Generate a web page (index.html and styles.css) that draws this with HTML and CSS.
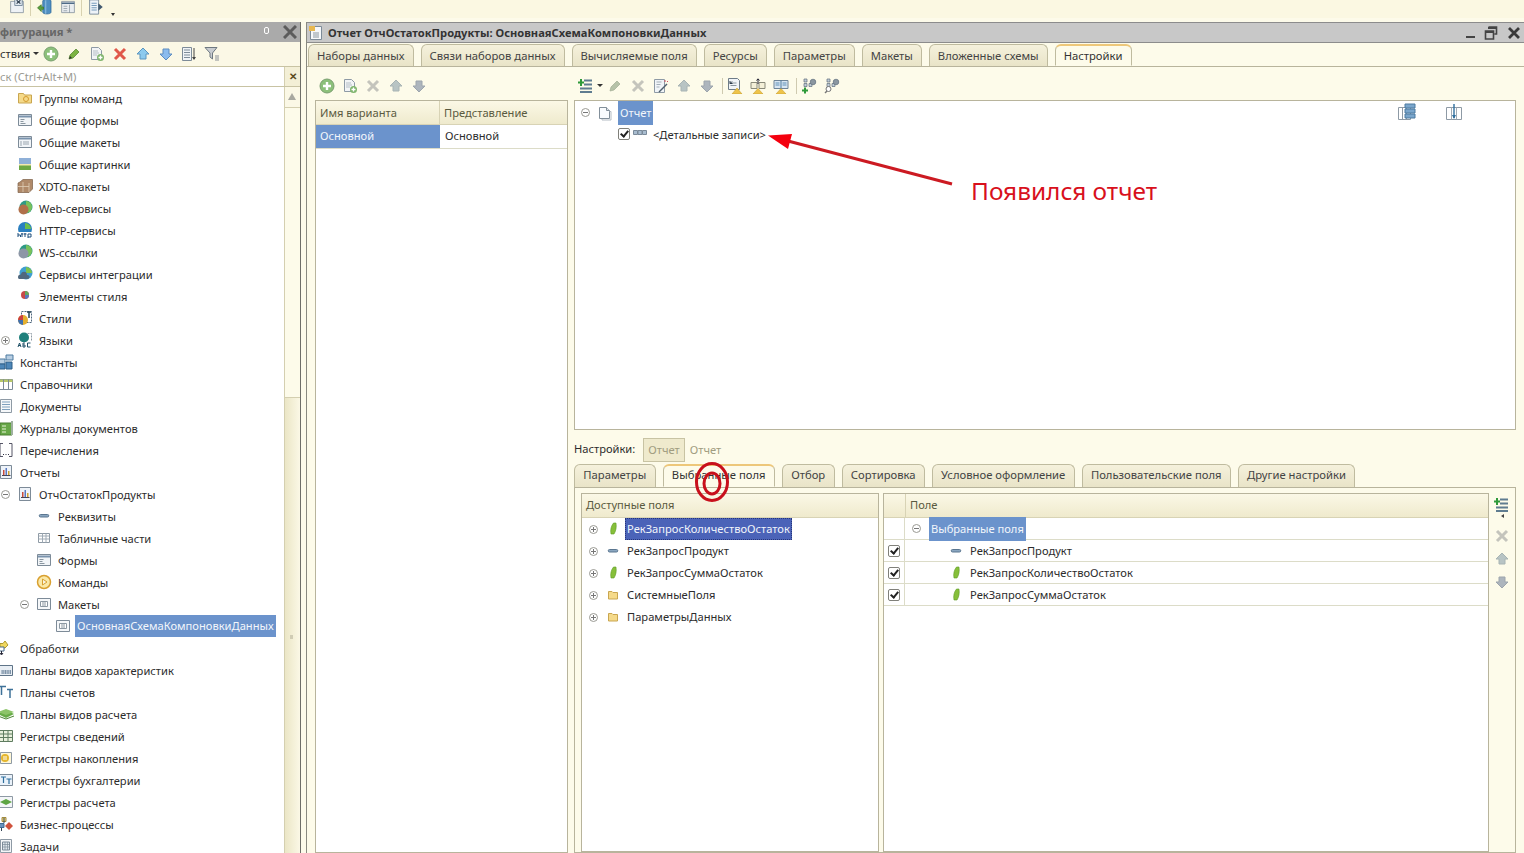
FILE: index.html
```html
<!DOCTYPE html>
<html>
<head>
<meta charset="utf-8">
<title>Отчет</title>
<link rel="stylesheet" href="styles.css">
</head>
<body>
<svg class="sprite" width="0" height="0">
	<symbol id="add" viewBox="0 0 16 16"><circle cx="8" cy="8" r="7" fill="#8cc07a" stroke="#7a9f70"/><path d="M8 4v8M4 8h8" stroke="#fff" stroke-width="2.400"/></symbol>
	<symbol id="pen" viewBox="0 0 16 16"><path d="M3 13l1-4 6-6 3 3-6 6z" fill="#7cb342" stroke="#4e7f2a" stroke-width=".7"/><path d="M3 13l1-3 2 2z" fill="#333"/></symbol>
	<symbol id="peng" viewBox="0 0 16 16"><path d="M3 13l1-4 6-6 3 3-6 6z" fill="#b6c2a8" stroke="#a0ac94" stroke-width=".7"/></symbol>
	<symbol id="copyadd" viewBox="0 0 16 16"><path d="M2.500 1.500h7l3 3v9h-10z" fill="#f2f4f6" stroke="#8e9aa5"/><path d="M4 5h5M4 7h6M4 9h4" stroke="#b5bec6"/><circle cx="11.500" cy="11.500" r="3.500" fill="#7fb56d"/><path d="M11.500 9.500v4M9.500 11.500h4" stroke="#fff" stroke-width="1.300"/></symbol>
	<symbol id="del" viewBox="0 0 16 16"><path d="M3 3l10 10M13 3L3 13" stroke="#e0584a" stroke-width="3"/></symbol>
	<symbol id="delg" viewBox="0 0 16 16"><path d="M3 3l10 10M13 3L3 13" stroke="#c4c4bc" stroke-width="3"/></symbol>
	<symbol id="up" viewBox="0 0 16 16"><path d="M8 2l6 6h-3v5H5V8H2z" fill="#8ccaee" stroke="#5c96c0"/></symbol>
	<symbol id="down" viewBox="0 0 16 16"><path d="M8 14l6-6h-3V3H5v5H2z" fill="#8cbcee" stroke="#5c8cc0"/></symbol>
	<symbol id="upg" viewBox="0 0 16 16"><path d="M8 2l6 6h-3v5H5V8H2z" fill="#b8c4c4" stroke="#a8b4b4"/></symbol>
	<symbol id="downg" viewBox="0 0 16 16"><path d="M8 14l6-6h-3V3H5v5H2z" fill="#adb5bd" stroke="#9da5ad"/></symbol>
	<symbol id="sortlist" viewBox="0 0 16 16"><path d="M1.500 1.500h9v13h-9z" fill="#f0f3f6" stroke="#7d8b98"/><path d="M3 4h6M3 6.500h6M3 9h6M3 11.500h6" stroke="#7d8b98"/><path d="M13 2v11" stroke="#444"/><path d="M11 11h4l-2 3z" fill="#444"/></symbol>
	<symbol id="filter" viewBox="0 0 16 16"><path d="M1 1.500h12L8.500 7v6L6 11V7z" fill="#c8ccd0" stroke="#6e7880"/><path d="M11 10h4M11 12h4M11 14h4" stroke="#8a9097"/></symbol>
	<symbol id="folder" viewBox="0 0 16 16"><path d="M3.500 4.500h3.500l1 1h4.500v6.500h-9z" fill="#f5da8a" stroke="#c9a650"/></symbol>
	<symbol id="cmdfolder" viewBox="0 0 16 16"><path d="M1.500 3.500h5l1 1.500h7v8h-13z" fill="#f5da8a" stroke="#c9a650"/><circle cx="9" cy="9" r="2.500" fill="none" stroke="#d39a30"/></symbol>
	<symbol id="docwin" viewBox="0 0 16 16"><path d="M2.500 1.500h11v13h-11z" fill="#f6f8fa" stroke="#7d8b98"/><path d="M1 1h6v5H1z" fill="#e8b850"/><path d="M5 8h6M5 10h6M5 12h6" stroke="#8a96a0"/></symbol>
	<symbol id="form" viewBox="0 0 16 16"><path d="M1.500 2.500h13v11h-13z" fill="#f2f5f8" stroke="#7d8b98"/><path d="M2 4.500h12" stroke="#7a93ad" stroke-width="2"/><path d="M3.500 7.500h4M3.500 9.500h3M3.500 11.500h5" stroke="#8a96a0"/></symbol>
	<symbol id="mock" viewBox="0 0 16 16"><path d="M1.500 2.500h13v11h-13z" fill="#f2f5f8" stroke="#7d8b98"/><path d="M2 4.500h12" stroke="#7a93ad" stroke-width="2"/><path d="M6 8h6M6 10h6M4 7v5" stroke="#9aa5af"/></symbol>
	<symbol id="layout" viewBox="0 0 16 16"><path d="M1.500 2.500h13v11h-13z" fill="#f6f8fa" stroke="#7d8b98"/><path d="M4.500 5.500h7v5h-7z" fill="#fff" stroke="#8c98a2"/><path d="M6 7h4M6 9h4" stroke="#8c98a2"/></symbol>
	<symbol id="pict" viewBox="0 0 16 16"><path d="M2 2h12v12H2z" fill="#8fb0d8"/><path d="M2 8h12v6H2z" fill="#6da845"/><path d="M2 8h12v1.500H2z" fill="#f2e8b0"/></symbol>
	<symbol id="xdto" viewBox="0 0 16 16"><path d="M3 4l3-2.500h9.500V11L12 14.500H1V5z" fill="#b08a6a" stroke="#7d6048" stroke-width=".7"/><path d="M1 8.500h11M6 4v10M12 5v9" stroke="#e0ceb8" stroke-width=".8"/></symbol>
	<symbol id="web" viewBox="0 0 16 16"><circle cx="9" cy="7" r="6.500" fill="#2e9a86"/><path d="M9 1a6 6 0 0 1 0 12" fill="#79c25b"/><circle cx="6.500" cy="9.500" r="5" fill="#b0704a"/></symbol>
	<symbol id="ws" viewBox="0 0 16 16"><circle cx="9" cy="7" r="6.500" fill="#2e9a86"/><path d="M9 1a6 6 0 0 1 0 12" fill="#79c25b"/><circle cx="6.500" cy="9.500" r="5" fill="#8d96a6"/></symbol>
	<symbol id="http" viewBox="0 0 16 16"><circle cx="8" cy="7" r="7" fill="#2a7fc0"/><path d="M8 1a6 6 0 0 1 6 6H8z" fill="#6cc04a"/><path d="M0 10h16v6H0z" fill="#fff"/><path d="M1 11v4M1 13h2.500v2M5 11v4M4 12h2.500M8 11v4M7 12h2.500M11 12v4M11 12h3v3h-3" stroke="#1e4f7c" fill="none"/></symbol>
	<symbol id="integr" viewBox="0 0 16 16"><circle cx="9" cy="7" r="6.500" fill="#3f9fd0"/><path d="M9 1a6 6 0 0 1 6 6H9z" fill="#7cc24e"/><path d="M1 11a2.500 2.500 0 0 1 3-2.500A3 3 0 0 1 10 9a2 2 0 0 1 1 4H2a2 2 0 0 1-1-2z" fill="#50687e"/></symbol>
	<symbol id="elem" viewBox="0 0 16 16"><circle cx="8" cy="7" r="4" fill="#c84a4a"/><path d="M8 3a4 4 0 0 1 4 4H8z" fill="#62a860"/><path d="M8 7h4a4 4 0 0 1-4 4z" fill="#5878c0"/></symbol>
	<symbol id="styles" viewBox="0 0 16 16"><path d="M4.500 1.500h10v11h-10z" fill="#fff" stroke="#50687e" stroke-dasharray="2 1"/><path d="M10 2h4M12 2v6" stroke="#245" stroke-width="1.500"/><circle cx="6" cy="10" r="5" fill="#e5b030"/><path d="M6 10V5a5 5 0 0 0-5 5z" fill="#c84040"/><path d="M6 10H1a5 5 0 0 0 5 5z" fill="#4070b0"/></symbol>
	<symbol id="lang" viewBox="0 0 16 16"><circle cx="7" cy="5.500" r="5" fill="#20807c"/><path d="M10.500 1.500h4v8" fill="none" stroke="#8c98a2" stroke-dasharray="2 1"/><path d="M0 10h16v6H0z" fill="#fff"/><path d="M1 15l1.500-4 1.500 4M1.500 13.500h2M6 11v4h2v-2H6M8 11H6M13.500 11h-3v4h3" stroke="#1d4f66" fill="none"/></symbol>
	<symbol id="const" viewBox="0 0 16 16"><path d="M1 5h6v5H1zM8 1h7v5H8z" fill="#b8cee2" stroke="#4d7aa0"/><path d="M1 10h6v5H1zM8 8h6v7H8z" fill="#4d86b8" stroke="#2f5f88"/></symbol>
	<symbol id="catalog" viewBox="0 0 16 16"><path d="M1.500 3.500h13v10h-13z" fill="#fff" stroke="#7d8b98"/><path d="M1.500 3.500h13v2.500h-13z" fill="#b8c86a"/><path d="M5.500 3.500v10M10.500 3.500v10" stroke="#7d8b98"/></symbol>
	<symbol id="doc" viewBox="0 0 16 16"><path d="M2.500 1.500h11v13h-11z" fill="#f6f8fa" stroke="#8e9aa5"/><path d="M4 4h8M4 6.500h8M4 9h8M4 11.500h8" stroke="#7ea0be"/></symbol>
	<symbol id="journal" viewBox="0 0 16 16"><path d="M2 3h12v12H2z" fill="#68a848" stroke="#4b7f33"/><path d="M14 1v14" stroke="#9fb0a0" stroke-width="2"/><path d="M4 6h4M4 9h4M4 12h4" stroke="#e8f3d8"/></symbol>
	<symbol id="enum" viewBox="0 0 16 16"><path d="M5 1.500H2v13h3M11 1.500h3v13h-3" fill="none" stroke="#556"/><path d="M5 12.500h1M7.500 12.500h1M10 12.500h1" stroke="#334"/></symbol>
	<symbol id="report" viewBox="0 0 16 16"><path d="M2.500 1.500h11v13h-11z" fill="#eef3f9" stroke="#7d8b98"/><path d="M5 11V6h1.500v5z" fill="#c84a3a"/><path d="M7.500 11V4H9v7z" fill="#5878c0"/><path d="M10 11V7h1.500v4z" fill="#d0a030"/><path d="M4 11.500h8.500" stroke="#445"/></symbol>
	<symbol id="attr" viewBox="0 0 16 16"><path d="M4.500 6.500h7a1 1 0 0 1 0 2.500h-7a1 1 0 0 1 0-2.500z" fill="#8aa6c0" stroke="#5a7690"/></symbol>
	<symbol id="table" viewBox="0 0 16 16"><path d="M2.500 3.500h11v9h-11z" fill="#fff" stroke="#8e9aa5"/><path d="M2.500 6h11M2.500 9h11M6.500 3.500v9M10 3.500v9" stroke="#a0abb5"/></symbol>
	<symbol id="cmd" viewBox="0 0 16 16"><circle cx="8" cy="8" r="6.500" fill="#fbe9a8" stroke="#d9a030" stroke-width="1.500"/><path d="M6.500 5v6L11 8z" fill="#f8f4e0" stroke="#d9a030"/></symbol>
	<symbol id="proc" viewBox="0 0 16 16"><path d="M2 8V3.500h3L7 1l3 4-3 3z" fill="#f0d860" stroke="#b09a30"/><path d="M1 7h5v4H1z" fill="#fff" stroke="#4a6a8a"/><path d="M3.500 11v3M2 13l1.500 2L5 13" stroke="#223" fill="none"/></symbol>
	<symbol id="pvh" viewBox="0 0 16 16"><path d="M1.500 3.500h13v10h-13z" fill="#e8eef4" stroke="#5f7488"/><path d="M3 9h10M3 11h10M5 8v4M7.500 8v4M10 8v4M12.500 8v4" stroke="#7e93a8"/></symbol>
	<symbol id="acct" viewBox="0 0 16 16"><path d="M1 2.500h7M3.500 2.500V11M9 5.500h6M12 5.500V14" stroke="#3e7198" stroke-width="1.500" fill="none"/></symbol>
	<symbol id="calc" viewBox="0 0 16 16"><path d="M0 8l8-4 8 4-8 4z" fill="#68ac48"/><path d="M0 6l8-3 8 3-8 3z" fill="#8cc468"/><path d="M0 10l8 3 8-3" stroke="#4d8634" fill="none"/></symbol>
	<symbol id="rsved" viewBox="0 0 16 16"><path d="M1.500 2.500h13v11h-13z" fill="#e8f0dc" stroke="#5f7c60"/><path d="M1.500 6h13M1.500 9.500h13M5.500 2.500v11M10 2.500v11" stroke="#5f7c60"/></symbol>
	<symbol id="racc" viewBox="0 0 16 16"><path d="M2.500 2.500h11v11h-11z" fill="#fff7d8" stroke="#8e9aa5"/><circle cx="7" cy="8" r="4" fill="#e4b52c"/><path d="M5 7h4M5 9h4" stroke="#fff"/></symbol>
	<symbol id="rbuh" viewBox="0 0 16 16"><path d="M1.500 2.500h13v11h-13z" fill="#eaf2fa" stroke="#7d8b98"/><path d="M3 5h5M5.500 5v6M8.500 7h5M11 7v5" stroke="#2e6f9e" stroke-width="1.200"/></symbol>
	<symbol id="rcalc" viewBox="0 0 16 16"><path d="M1.500 2.500h13v11h-13z" fill="#f4f6f8" stroke="#8e9aa5"/><path d="M2 8l6-3 6 3-6 3z" fill="#5ea544"/></symbol>
	<symbol id="biz" viewBox="0 0 16 16"><path d="M4 1.500h4v4H4z" fill="#f2d880" stroke="#a08a40"/><path d="M1 7.500h5v4H1z" fill="#6a92bc" stroke="#3e6a94"/><path d="M11 6l4 4-4 4-4-4z" fill="#d0523c"/><path d="M6 2v5M3.500 12v3" stroke="#345"/></symbol>
	<symbol id="task" viewBox="0 0 16 16"><path d="M2.500 1.500h11v13h-11z" fill="#f4f6f8" stroke="#8e9aa5"/><path d="M4.500 4h7v8h-7z" fill="#dfe6ec" stroke="#7d8b98"/><path d="M4.500 6.500h7M4.500 9h7M7 4v8M9.500 4v8" stroke="#7d8b98" stroke-width=".7"/></symbol>
	<symbol id="green" viewBox="0 0 16 16"><path d="M6 13c-.8-4 0-8 2.500-11H11c.6 4 0 8-2 11z" fill="#86bf3a" stroke="#5d9a24" stroke-width=".6"/></symbol>
	<symbol id="page" viewBox="0 0 16 16"><path d="M2.500 2.500h7l3 3v8h-10z" fill="#fafcfe" stroke="#828f9a"/><path d="M9.500 2.500v3h3" fill="#dde4ea" stroke="#828f9a"/><path d="M12.500 6.500h1.500v8.500H5v-1" fill="none" stroke="#b4bcc4"/></symbol>
	<symbol id="group" viewBox="0 0 16 16"><path d="M1.500 4.500h4v4h-4zM6 4.500h4v4H6zM10.500 4.500h4v4h-4z" fill="#a9bdd0" stroke="#7a8a9a"/></symbol>
	<symbol id="addrow" viewBox="0 0 16 16"><path d="M6 2.500h8M6 6.500h8M2 10.500h12M2 14h12" stroke="#5f7c90" stroke-width="2"/><path d="M3 1v7M0 4.500h6" stroke="#2f9a3a" stroke-width="2"/></symbol>
	<symbol id="wand" viewBox="0 0 16 16"><path d="M1.500 1.500h10v13h-10z" fill="#f0f4f8" stroke="#8e9aa5"/><path d="M3.500 4h5M3.500 6.500h4M3.500 9h3" stroke="#a5afb8"/><path d="M6 14l8-8" stroke="#50606e" stroke-width="1.400"/><path d="M12 2v2M14 3l1 1" stroke="#d05060"/></symbol>
	<symbol id="tdoc" viewBox="0 0 16 16"><path d="M1.500 .5h9l2 2v9h-11z" fill="#f0f4f8" stroke="#6e7c88"/><path d="M3.500 5h6M3.500 7.500h6" stroke="#8a96a0"/><path d="M5 3.500l-2 2M3 3v2.500h2.500" stroke="#2a3a4a" fill="none"/><path d="M5 16h10l-5-6z" fill="#eec34a" stroke="#c8a030" stroke-width=".6"/></symbol>
	<symbol id="tup" viewBox="0 0 16 16"><path d="M1 4.500h6v6H1zM9 4.500h6v6H9z" fill="#f4f0d8" stroke="#8a8a7a"/><path d="M8 6V1M6.500 2.500L8 .8l1.500 1.700" stroke="#223" fill="none"/><path d="M3 16h10l-5-5.500z" fill="#eec34a" stroke="#c8a030" stroke-width=".6"/></symbol>
	<symbol id="tbook" viewBox="0 0 16 16"><path d="M1 2.500h14v8H1z" fill="#d8e6f2" stroke="#6e8498"/><path d="M8 2.500v8" stroke="#4d7aa0"/><path d="M2.500 5h4M9.500 5h4M2.500 7h4M9.500 7h4" stroke="#5f90b8"/><path d="M3 16h10l-5-5.500z" fill="#eec34a" stroke="#c8a030" stroke-width=".6"/></symbol>
	<symbol id="gear" viewBox="0 0 16 16"><path d="M3 1h3v3H3zM3 5.500h3v3H3zM8 5.500h3v3H8z" fill="#c0ccd8" stroke="#5f6e7c" stroke-width=".7"/><circle cx="12" cy="4" r="2.800" fill="#8a96a0" stroke="#5f6e7c" stroke-width=".7"/><path d="M4 9.500v6M1 12.500h6" stroke="#2f9a3a" stroke-width="2"/></symbol>
	<symbol id="gearf" viewBox="0 0 16 16"><path d="M3 1h3v3H3zM3 5.500h3v3H3zM8 5.500h3v3H8z" fill="#c0ccd8" stroke="#5f6e7c" stroke-width=".7"/><circle cx="12" cy="4" r="2.800" fill="#8a96a0" stroke="#5f6e7c" stroke-width=".7"/><circle cx="4.500" cy="11" r="2.500" fill="#fff" stroke="#777"/><path d="M3 13l-2 2" stroke="#777" stroke-width="1.500"/></symbol>
	<symbol id="colsdb" viewBox="0 0 20 20"><path d="M1.500 5.500h12v12h-12z" fill="#fff" stroke="#8e9aa5"/><path d="M5.500 5.500v12M9.500 5.500v12" stroke="#8e9aa5"/><path d="M8 2h10v4H8zM8 7h10v4H8zM8 12h10v4H8z" fill="#7aa6cc" stroke="#4d7aa0"/></symbol>
	<symbol id="colsar" viewBox="0 0 20 20"><path d="M2.500 5.500h15v12h-15z" fill="#fff" stroke="#8e9aa5"/><path d="M7.500 5.500v12M12.500 5.500v12" stroke="#a0abb5"/><path d="M10 2v14" stroke="#2f6f9e" stroke-width="1.400"/><path d="M8 13h4l-2 4z" fill="#2f6f9e"/></symbol>
	<symbol id="db" viewBox="0 0 24 24"><path d="M9 4c0-3 11-3 11 0v15c0 3-11 3-11 0z" fill="#4f8fc2" stroke="#2f6a9a"/><path d="M2 13l5-4v3h3v3H7v3z" fill="#5a9f3e" stroke="#3c7a28"/><path d="M13 3v18" stroke="#a8d0ec"/></symbol>
	<symbol id="cfg" viewBox="0 0 24 24"><path d="M3.500 4.500h17v15h-17z" fill="#eef2f6" stroke="#7d8b98"/><path d="M9 1h10v9H9z" fill="#dfe8f0" stroke="#5f7488"/><path d="M11.500 3l5 4.500M16.500 3l-5 4.500" stroke="#2a3a4a" stroke-width="1.500"/></symbol>
	<symbol id="tbl" viewBox="0 0 24 24"><path d="M3.500 4.500h17v15h-17z" fill="#e9edf0" stroke="#7d8b98"/><path d="M3.500 7h17" stroke="#4d6a86" stroke-width="2"/><path d="M6 11h5M6 14h5M6 17h5M14 9v11" stroke="#8a96a0"/></symbol>
	<symbol id="exit" viewBox="0 0 24 24"><path d="M3.500 2.500h12v19h-12z" fill="#eef3f8" stroke="#5f7488"/><path d="M6 7h7M6 10h7M6 13h7M6 16h7" stroke="#4f7da6"/><path d="M15 7l6 5-6 5z" fill="#425a70"/></symbol>
</svg>

<div class="page">
	<div class="topbar">
		<svg class="ti first"><use href="#cfg"/></svg>
		<div class="tsep"></div>
		<svg class="ti"><use href="#db"/></svg>
		<svg class="ti"><use href="#tbl"/></svg>
		<div class="tsep"></div>
		<svg class="ti"><use href="#exit"/></svg>
		<span class="tarrow"></span>
	</div>

	<div class="main">
		<div class="left">
			<div class="panehead">
				<span class="panetitle">фигурация *</span>
				<span class="pin"></span>
				<svg class="paneclose" viewBox="0 0 14 14"><path d="M1 1l12 12M13 1L1 13" stroke="#5c5c5c" stroke-width="3"/></svg>
			</div>
			<div class="lefttools">
				<span class="menu">ствия</span><span class="caret"></span>
				<svg class="ic tool"><use href="#add"/></svg>
				<svg class="ic tool"><use href="#pen"/></svg>
				<svg class="ic tool"><use href="#copyadd"/></svg>
				<svg class="ic tool"><use href="#del"/></svg>
				<svg class="ic tool"><use href="#up"/></svg>
				<svg class="ic tool"><use href="#down"/></svg>
				<svg class="ic tool"><use href="#sortlist"/></svg>
				<svg class="ic tool"><use href="#filter"/></svg>
			</div>
			<div class="search">
				<span class="hint">ск (Ctrl+Alt+M)</span>
				<span class="clear">✕</span>
			</div>
			<div class="treewrap">
				<div class="tree">
					<div class="row lv1"><svg class="ic"><use href="#cmdfolder"/></svg>Группы команд</div>
					<div class="row lv1"><svg class="ic"><use href="#form"/></svg>Общие формы</div>
					<div class="row lv1"><svg class="ic"><use href="#mock"/></svg>Общие макеты</div>
					<div class="row lv1"><svg class="ic"><use href="#pict"/></svg>Общие картинки</div>
					<div class="row lv1"><svg class="ic"><use href="#xdto"/></svg>XDTO-пакеты</div>
					<div class="row lv1"><svg class="ic"><use href="#web"/></svg>Web-сервисы</div>
					<div class="row lv1"><svg class="ic"><use href="#http"/></svg>HTTP-сервисы</div>
					<div class="row lv1"><svg class="ic"><use href="#ws"/></svg>WS-ссылки</div>
					<div class="row lv1"><svg class="ic"><use href="#integr"/></svg>Сервисы интеграции</div>
					<div class="row lv1"><svg class="ic"><use href="#elem"/></svg>Элементы стиля</div>
					<div class="row lv1"><svg class="ic"><use href="#styles"/></svg>Стили</div>
					<div class="row lv1"><span class="exp plus"></span><svg class="ic"><use href="#lang"/></svg>Языки</div>
					<div class="row lv0"><svg class="ic"><use href="#const"/></svg>Константы</div>
					<div class="row lv0"><svg class="ic"><use href="#catalog"/></svg>Справочники</div>
					<div class="row lv0"><svg class="ic"><use href="#doc"/></svg>Документы</div>
					<div class="row lv0"><svg class="ic"><use href="#journal"/></svg>Журналы документов</div>
					<div class="row lv0"><svg class="ic"><use href="#enum"/></svg>Перечисления</div>
					<div class="row lv0"><svg class="ic"><use href="#report"/></svg>Отчеты</div>
					<div class="row lv1"><span class="exp"></span><svg class="ic"><use href="#report"/></svg>ОтчОстатокПродукты</div>
					<div class="row lv2"><svg class="ic"><use href="#attr"/></svg>Реквизиты</div>
					<div class="row lv2"><svg class="ic"><use href="#table"/></svg>Табличные части</div>
					<div class="row lv2"><svg class="ic"><use href="#form"/></svg>Формы</div>
					<div class="row lv2"><svg class="ic"><use href="#cmd"/></svg>Команды</div>
					<div class="row lv2"><span class="exp"></span><svg class="ic"><use href="#layout"/></svg>Макеты</div>
					<div class="row lv3"><svg class="ic"><use href="#layout"/></svg><span class="sel">ОсновнаяСхемаКомпоновкиДанных</span></div>
					<div class="row lv0"><svg class="ic"><use href="#proc"/></svg>Обработки</div>
					<div class="row lv0"><svg class="ic"><use href="#pvh"/></svg>Планы видов характеристик</div>
					<div class="row lv0"><svg class="ic"><use href="#acct"/></svg>Планы счетов</div>
					<div class="row lv0"><svg class="ic"><use href="#calc"/></svg>Планы видов расчета</div>
					<div class="row lv0"><svg class="ic"><use href="#rsved"/></svg>Регистры сведений</div>
					<div class="row lv0"><svg class="ic"><use href="#racc"/></svg>Регистры накопления</div>
					<div class="row lv0"><svg class="ic"><use href="#rbuh"/></svg>Регистры бухгалтерии</div>
					<div class="row lv0"><svg class="ic"><use href="#rcalc"/></svg>Регистры расчета</div>
					<div class="row lv0"><svg class="ic"><use href="#biz"/></svg>Бизнес-процессы</div>
					<div class="row lv0"><svg class="ic"><use href="#task"/></svg>Задачи</div>
				</div>
				<div class="vscroll">
					<div class="sbtn"></div>
					<div class="thumb"></div>
					<div class="grip"></div>
				</div>
			</div>
		</div>

		<div class="doc">
			<div class="dochead">
				<svg class="ic docicon"><use href="#docwin"/></svg>
				<span class="doctitle">Отчет ОтчОстатокПродукты: ОсновнаяСхемаКомпоновкиДанных</span>
				<div class="winbtns">
					<span class="wmin"></span>
					<svg class="wbtn" viewBox="0 0 14 14"><path d="M4.500 1h8v7h-2M1.500 5h8v8h-8z" fill="none" stroke="#444" stroke-width="1.600"/><path d="M4 2h9M1 6h9" stroke="#444" stroke-width="2"/></svg>
					<svg class="wbtn" viewBox="0 0 14 14"><path d="M2 2l10 10M12 2L2 12" stroke="#3a3a3a" stroke-width="2.800"/></svg>
				</div>
			</div>
			<div class="tabs toptabs">
				<span class="tab">Наборы данных</span>
				<span class="tab">Связи наборов данных</span>
				<span class="tab">Вычисляемые поля</span>
				<span class="tab">Ресурсы</span>
				<span class="tab">Параметры</span>
				<span class="tab">Макеты</span>
				<span class="tab">Вложенные схемы</span>
				<span class="tab active">Настройки</span>
			</div>
			<div class="docbody">
				<div class="variants">
					<div class="tools">
						<svg class="ic tool"><use href="#add"/></svg>
						<svg class="ic tool"><use href="#copyadd"/></svg>
						<svg class="ic tool"><use href="#delg"/></svg>
						<svg class="ic tool"><use href="#upg"/></svg>
						<svg class="ic tool"><use href="#downg"/></svg>
					</div>
					<div class="box varbox">
						<div class="thead">
							<span class="th varname">Имя варианта</span>
							<span class="th">Представление</span>
						</div>
						<div class="varrow">
							<span class="varname varsel">Основной</span>
							<span class="varview">Основной</span>
						</div>
					</div>
				</div>
				<div class="settings">
					<div class="tools">
						<svg class="ic tool"><use href="#addrow"/></svg><span class="caret small"></span>
						<svg class="ic tool"><use href="#peng"/></svg>
						<svg class="ic tool"><use href="#delg"/></svg>
						<svg class="ic tool"><use href="#wand"/></svg>
						<svg class="ic tool"><use href="#upg"/></svg>
						<svg class="ic tool"><use href="#downg"/></svg>
						<div class="vsep"></div>
						<svg class="ic tool"><use href="#tdoc"/></svg>
						<svg class="ic tool"><use href="#tup"/></svg>
						<svg class="ic tool"><use href="#tbook"/></svg>
						<div class="vsep"></div>
						<svg class="ic tool"><use href="#gear"/></svg>
						<svg class="ic tool"><use href="#gearf"/></svg>
					</div>
					<div class="box structure">
						<div class="strow">
							<span class="exp"></span>
							<svg class="ic"><use href="#page"/></svg>
							<span class="sel tall">Отчет</span>
							<div class="strtools">
								<svg class="bigic"><use href="#colsdb"/></svg>
								<svg class="bigic"><use href="#colsar"/></svg>
							</div>
						</div>
						<div class="strow detail">
							<span class="check"></span>
							<svg class="ic"><use href="#group"/></svg>
							<span>&lt;Детальные записи&gt;</span>
						</div>
					</div>
					<div class="crumbs">
						<span class="crumblabel">Настройки:</span>
						<span class="crumb current">Отчет</span>
						<span class="crumb">Отчет</span>
					</div>
					<div class="tabs subtabs">
						<span class="tab">Параметры</span>
						<span class="tab active">Выбранные поля</span>
						<span class="tab">Отбор</span>
						<span class="tab">Сортировка</span>
						<span class="tab">Условное оформление</span>
						<span class="tab">Пользовательские поля</span>
						<span class="tab">Другие настройки</span>
					</div>
					<div class="fields">
						<div class="box avail">
							<div class="thead"><span class="th">Доступные поля</span></div>
							<div class="frow"><span class="exp plus"></span><svg class="ic"><use href="#green"/></svg><span class="selblue">РекЗапросКоличествоОстаток</span></div>
							<div class="frow"><span class="exp plus"></span><svg class="ic"><use href="#attr"/></svg><span class="ftext">РекЗапросПродукт</span></div>
							<div class="frow"><span class="exp plus"></span><svg class="ic"><use href="#green"/></svg><span class="ftext">РекЗапросСуммаОстаток</span></div>
							<div class="frow"><span class="exp plus"></span><svg class="ic"><use href="#folder"/></svg><span class="ftext">СистемныеПоля</span></div>
							<div class="frow"><span class="exp plus"></span><svg class="ic"><use href="#folder"/></svg><span class="ftext">ПараметрыДанных</span></div>
						</div>
						<div class="box chosen">
							<div class="thead"><span class="th chk"></span><span class="th">Поле</span></div>
							<div class="crow"><span class="cellchk"></span><span class="cell root"><span class="exp"></span><span class="sel tall">Выбранные поля</span></span></div>
							<div class="crow"><span class="cellchk"><span class="check"></span></span><span class="cell"><svg class="ic"><use href="#attr"/></svg>РекЗапросПродукт</span></div>
							<div class="crow"><span class="cellchk"><span class="check"></span></span><span class="cell"><svg class="ic"><use href="#green"/></svg>РекЗапросКоличествоОстаток</span></div>
							<div class="crow"><span class="cellchk"><span class="check"></span></span><span class="cell"><svg class="ic"><use href="#green"/></svg>РекЗапросСуммаОстаток</span></div>
						</div>
						<div class="sidetools">
							<svg class="ic"><use href="#addrow"/></svg>
							<span class="sidecaret"></span>
							<svg class="ic"><use href="#delg"/></svg>
							<svg class="ic"><use href="#upg"/></svg>
							<svg class="ic"><use href="#downg"/></svg>
						</div>
					</div>
				</div>
			</div>
		</div>
	</div>
</div>

<!-- annotation drawn on top of the screenshot -->
<svg class="notes" width="1524" height="853">
	<path d="M952 184L788 141" stroke="#cc1a22" stroke-width="3"/>
	<path d="M768 135.500l24-1.500-4 15z" fill="#f4000e"/>
	<ellipse cx="712" cy="482" rx="15.500" ry="18.500" fill="none" stroke="#c8101c" stroke-width="3"/>
	<ellipse cx="712" cy="483.500" rx="8" ry="10.500" fill="none" stroke="#c8101c" stroke-width="3"/>
</svg>
<div class="notetext">Появился отчет</div>
</body>
</html>
```

FILE: styles.css
```css
html, body {
	margin: 0;
	padding: 0;
	overflow: hidden;
}
body {
	width: 1524px;
	height: 853px;
	position: relative;
	background: #fdfbea;
	font-family: "Noto Sans", "Open Sans", sans-serif;
	font-size: 11.150px;
	color: #2c2c2c;
}
.sprite {
	display: block;
	height: 0;
}
.page {
	height: 853px;
	display: flex;
	flex-direction: column;
}

/* top toolbar */
.topbar {
	height: 20px;
	flex: none;
	display: flex;
	align-items: flex-start;
	background: #fbf8e2;
	overflow: hidden;
	margin-top: -2px;
}
.ti {
	width: 18px;
	height: 18px;
}
.ti.first {
	margin-left: 8px;
}
.ti + .ti {
	margin-left: 5px;
}
.tsep {
	width: 1px;
	height: 18px;
	background: #d8d2b0;
	margin: 0 5px 0 4px;
}
.tarrow {
	border: 2px solid transparent;
	border-top: 3px solid #333;
	border-bottom: 0;
	margin: 15px 0 0 6px;
}

.main {
	flex: 1;
	display: flex;
	min-height: 0;
	margin-top: 4px;
}

/* left configuration panel */
.left {
	width: 300px;
	flex: none;
	display: flex;
	flex-direction: column;
	border-right: 1px solid #6e6e68;
}
.panehead {
	height: 20px;
	flex: none;
	display: flex;
	align-items: center;
	background: #aaaaaa;
}
.panetitle {
	flex: 1;
	font-weight: bold;
	padding-bottom: 2px;
	color: #666;
}
.pin {
	width: 3px;
	height: 5px;
	border: 1px solid #fff;
	border-radius: 2px;
	margin: 0 14px 3px 0;
}
.paneclose {
	width: 14px;
	height: 14px;
	margin-right: 3px;
}
.lefttools {
	height: 24px;
	flex: none;
	display: flex;
	align-items: center;
	background: #fbf8e6;
	box-sizing: border-box;
	padding-bottom: 1px;
}
.menu {
	margin-right: 3px;
}
.caret {
	border: 3px solid transparent;
	border-top: 3px solid #333;
	border-bottom: 0;
	margin-right: 4px;
}
.caret.small {
	margin: 0 4px 0 -4px;
}
.ic {
	width: 16px;
	height: 16px;
	flex: none;
}
.tool {
	margin-right: 7px;
}
.search {
	height: 21px;
	flex: none;
	display: flex;
	align-items: center;
	justify-content: space-between;
	background: #fff;
	border-top: 1px solid #c8c3a3;
	border-bottom: 1px solid #c8c3a3;
	box-sizing: border-box;
}
.hint {
	color: #9b9b93;
}
.clear {
	width: 15px;
	height: 19px;
	line-height: 19px;
	text-align: center;
	background: #f3efd6;
	border-left: 1px solid #d4cfb0;
	font-size: 10px;
	font-weight: bold;
	color: #5a4a20;
}
.treewrap {
	flex: 1;
	display: flex;
	min-height: 0;
}
.tree {
	flex: 1;
	background: #fff;
	overflow: hidden;
}
.row {
	height: 22px;
	display: flex;
	align-items: center;
	white-space: nowrap;
}
.row .ic {
	margin-right: 6px;
}
.lv0 .ic {
	margin-left: -2px;
}
.lv1 {
	padding-left: 17px;
}
.lv2 {
	padding-left: 36px;
}
.lv3 {
	padding-left: 55px;
}
.row.lv3 .ic {
	margin-right: 4px;
}
.sel {
	background: #6b93cc;
	color: #f2f6fb;
	padding: 0 2px;
	line-height: 22px;
}
.tall {
	line-height: 24px;
}
.exp {
	width: 7px;
	height: 7px;
	flex: none;
	border: 1px solid #9a9a94;
	border-radius: 50%;
	position: relative;
	margin-left: -16px;
	margin-right: 7px;
}
.exp::before {
	content: "";
	position: absolute;
	left: 1px;
	top: 3px;
	width: 5px;
	height: 1px;
	background: #777;
}
.exp.plus::after {
	content: "";
	position: absolute;
	left: 3px;
	top: 1px;
	width: 1px;
	height: 5px;
	background: #777;
}
.vscroll {
	width: 15px;
	flex: none;
	background: linear-gradient(to right, #ebe6c6, #fbf8e6);
	border-left: 1px solid #d4cfb0;
}
.sbtn {
	height: 20px;
	background: #fbf8e6;
	border-bottom: 1px solid #d4cfb0;
	position: relative;
}
.sbtn::before {
	content: "";
	position: absolute;
	left: 3px;
	top: 6px;
	border: 4px solid transparent;
	border-bottom: 7px solid #a8a8a0;
	border-top: 0;
}
.thumb {
	height: 289px;
	background: #fdfbea;
	border-bottom: 1px solid #d4cfb0;
}
.grip {
	width: 3px;
	height: 4px;
	margin: 237px 0 0 5px;
	background: #d0ccb4;
}

/* document window */
.doc {
	flex: 1;
	min-width: 0;
	display: flex;
	flex-direction: column;
	margin-left: 5px;
	border-left: 1px solid #8a8a80;
	background: #fdfbea;
}
.dochead {
	height: 21px;
	flex: none;
	display: flex;
	align-items: center;
	box-sizing: border-box;
	background: #c8c8c8;
	border-top: 1px solid #8c8c8c;
	border-bottom: 1px solid #8c8c8c;
}
.docicon {
	margin: 0 4px 0 1px;
}
.doctitle {
	flex: 1;
	font-weight: bold;
	color: #333;
}
.winbtns {
	display: flex;
	align-items: center;
	gap: 9px;
	padding-right: 3px;
}
.wmin {
	width: 9px;
	height: 2px;
	background: #444;
	margin-top: 9px;
}
.wbtn {
	width: 14px;
	height: 14px;
}
.tabs {
	display: flex;
	flex: none;
}
.toptabs {
	height: 24px;
	padding: 1px 0 0 1px;
	box-sizing: border-box;
	gap: 7px;
	border-bottom: 1px solid #b8b49c;
}
.tab {
	height: 100%;
	box-sizing: border-box;
	padding: 3px 8px 0;
	margin-bottom: -1px;
	border: 1px solid #bfbb9f;
	border-bottom: 0;
	border-radius: 6px 6px 0 0;
	background: linear-gradient(#f5f1dc, #e9e4c8);
	color: #444;
	font-size: 11.250px;
	white-space: nowrap;
}
.tab.active {
	background: #fdfbea;
	border-top: 2px solid #edc77a;
	border-bottom: 1px solid #fdfbea;
	padding-top: 2px;
	color: #333;
}
.docbody {
	flex: 1;
	min-height: 0;
	display: flex;
	padding-left: 8px;
}
.tools {
	height: 33px;
	flex: none;
	display: flex;
	align-items: center;
	padding: 4px 0 0 4px;
	box-sizing: border-box;
}
.vsep {
	width: 1px;
	height: 16px;
	background: #cfcab0;
	margin: 0 4px 0 0;
}
.box {
	border: 1px solid #b8b49c;
	background: #fff;
	box-sizing: border-box;
}
.variants {
	width: 253px;
	flex: none;
	display: flex;
	flex-direction: column;
}
.varbox {
	flex: 1;
}
.thead {
	height: 23px;
	display: flex;
	background: linear-gradient(#fbf8e6, #efeacd);
	border-bottom: 1px solid #d8d3b5;
}
.th {
	flex: 1;
	padding-left: 4px;
	line-height: 23px;
	color: #5a5a40;
}
.fields .th {
	line-height: 21px;
}
.th.varname {
	flex: none;
	width: 124px;
	border-right: 1px solid #d8d3b5;
	box-sizing: border-box;
}
.th.chk {
	flex: none;
	width: 21px;
	padding: 0;
	border-right: 1px solid #d8d3b5;
}
.varrow {
	height: 23px;
	display: flex;
	line-height: 22px;
	border-bottom: 1px solid #dcdcc8;
}
.varrow .varname {
	width: 124px;
	box-sizing: border-box;
	padding-left: 4px;
	background: #6b93cc;
	color: #f2f6fb;
}
.varview {
	padding-left: 5px;
}
.settings {
	flex: 1;
	min-width: 0;
	display: flex;
	flex-direction: column;
	padding: 0 8px 0 6px;
}
.structure {
	height: 330px;
	flex: none;
}
.strow {
	height: 23px;
	display: flex;
	align-items: center;
	padding-left: 22px;
}
.strow .ic {
	margin-right: 5px;
}
.strow .exp {
	margin-left: -16px;
	margin-right: 7px;
}
.strtools {
	margin: -2px 0 0 auto;
	display: flex;
	gap: 27px;
	padding-right: 51px;
}
.bigic {
	width: 20px;
	height: 20px;
}
.detail {
	padding-left: 43px;
	height: 20px;
}
.detail .ic {
	margin-right: 5px;
	margin-left: 2px;
}
.check {
	width: 10px;
	height: 10px;
	flex: none;
	display: inline-block;
	position: relative;
	border: 1px solid #80807a;
	border-radius: 2px;
	background: #fff;
}
.check::after {
	content: "";
	position: absolute;
	left: 3px;
	top: 0;
	width: 3px;
	height: 6px;
	border: solid #222;
	border-width: 0 2px 2px 0;
	transform: rotate(40deg);
}
.crumbs {
	height: 34px;
	flex: none;
	display: flex;
	align-items: center;
	padding-top: 5px;
	box-sizing: border-box;
}
.crumblabel {
	margin-top: -3px;
	margin-right: 8px;
}
.crumb {
	height: 22px;
	line-height: 22px;
	padding: 0 4px;
	color: #a09c80;
	border: 1px solid transparent;
}
.crumb.current {
	background: #efeacd;
	border-color: #c8c3a3;
}
.subtabs {
	height: 23px;
	gap: 7px;
	border-bottom: 1px solid #b8b49c;
	box-sizing: content-box;
}
.subtabs .tab {
	padding: 2px 8.300px 0;
}
.subtabs .tab.active {
	padding-top: 1px;
}
.fields {
	flex: 1;
	min-height: 0;
	display: flex;
	padding: 5px 0 0 6px;
	border: 1px solid #b8b49c;
	border-top: 0;
}
.avail {
	width: 298px;
	flex: none;
}
.frow {
	height: 22px;
	display: flex;
	align-items: center;
	padding-left: 23px;
}
.frow .ic {
	margin: 0 4px 0 -1px;
}
.frow .exp {
	margin-right: 8px;
}
.selblue, .ftext {
	padding: 0 2px;
	line-height: 22px;
}
.selblue {
	background: #4b63b8;
	color: #f2f5fb;
	outline: 1px dotted #26357a;
	outline-offset: -1px;
}
.chosen {
	flex: 1;
	margin-left: 4px;
}
.crow {
	height: 22px;
	display: flex;
	align-items: center;
	border-bottom: 1px solid #dcdcc8;
	box-sizing: border-box;
}
.cellchk {
	width: 21px;
	height: 100%;
	flex: none;
	box-sizing: border-box;
	display: flex;
	align-items: center;
	justify-content: center;
	border-right: 1px solid #dcdcc8;
}
.cell {
	display: flex;
	align-items: center;
	padding-left: 43px;
}
.cell .ic {
	margin-right: 6px;
}
.cell.root {
	padding-left: 23px;
}
.cell.root .exp {
	margin-right: 8px;
}
.sidetools {
	width: 26px;
	flex: none;
	display: flex;
	flex-direction: column;
	align-items: center;
	gap: 7px;
	padding-top: 4px;
}
.sidecaret {
	border: 2px solid transparent;
	border-right: 3px solid #444;
	border-left: 0;
	margin: -6px 0 3px;
}

/* annotation over the page */
.notes {
	position: absolute;
	left: 0;
	top: 0;
	pointer-events: none;
}
.notetext {
	position: absolute;
	left: 971px;
	top: 175px;
	font-size: 24.400px;
	line-height: 32px;
	color: #d8101c;
}
```
